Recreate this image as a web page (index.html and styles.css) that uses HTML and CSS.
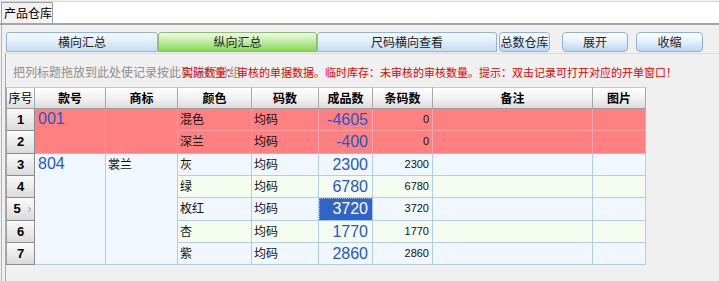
FILE: index.html
```html
<!DOCTYPE html>
<html lang="zh-CN">
<head>
<meta charset="utf-8">
<title>产品仓库</title>
<link rel="stylesheet" href="styles.css">
</head>
<body>
<div class="tabstrip"><div class="tab">产品仓库</div></div>
<div class="frame">
  <div class="toolbar">
    <div class="btn w1">横向汇总</div>
    <div class="btn w2 active">纵向汇总</div>
    <div class="btn w3">尺码横向查看</div>
    <div class="btn w4 round">总数仓库</div>
    <div class="btn w5 round">展开</div>
    <div class="btn w6 round">收缩</div>
  </div>
  <div class="panel">
    <div class="hint">
      <span class="hint-gray">把列标题拖放到此处使记录按此列进行分组</span>
      <span class="hint-red">实际数量：审核的单据数据。临时库存：未审核的审核数量。提示：双击记录可打开对应的开单窗口！</span>
    </div>
    <table class="grid">
      <colgroup>
        <col class="c-no"><col class="c-code"><col class="c-brand"><col class="c-color"><col class="c-size"><col class="c-qty"><col class="c-bar"><col class="c-note"><col class="c-pic">
      </colgroup>
      <thead>
        <tr>
          <th class="th-no">序号</th><th>款号</th><th>商标</th><th>颜色</th><th>码数</th><th>成品数</th><th>条码数</th><th>备注</th><th>图片</th>
        </tr>
      </thead>
      <tbody>
        <tr class="pink">
          <td class="rn">1</td>
          <td class="code" rowspan="2">001</td>
          <td rowspan="2"></td>
          <td class="txt">混色</td><td class="txt">均码</td>
          <td class="qty">-4605</td><td class="bar">0</td><td></td><td></td>
        </tr>
        <tr class="pink tall">
          <td class="rn">2</td>
          <td class="txt">深兰</td><td class="txt">均码</td>
          <td class="qty">-400</td><td class="bar">0</td><td></td><td></td>
        </tr>
        <tr class="blue">
          <td class="rn">3</td>
          <td class="code merged" rowspan="5">804</td>
          <td class="txt merged" rowspan="5">裳兰</td>
          <td class="txt">灰</td><td class="txt">均码</td>
          <td class="qty">2300</td><td class="bar">2300</td><td></td><td></td>
        </tr>
        <tr class="green">
          <td class="rn">4</td>
          <td class="txt">绿</td><td class="txt">均码</td>
          <td class="qty">6780</td><td class="bar">6780</td><td></td><td></td>
        </tr>
        <tr class="blue tall">
          <td class="rn">5<span class="mark">›</span></td>
          <td class="txt">枚红</td><td class="txt">均码</td>
          <td class="qty sel">3720</td><td class="bar">3720</td><td></td><td></td>
        </tr>
        <tr class="green">
          <td class="rn">6</td>
          <td class="txt">杏</td><td class="txt">均码</td>
          <td class="qty">1770</td><td class="bar">1770</td><td></td><td></td>
        </tr>
        <tr class="blue">
          <td class="rn">7</td>
          <td class="txt">紫</td><td class="txt">均码</td>
          <td class="qty">2860</td><td class="bar">2860</td><td></td><td></td>
        </tr>
      </tbody>
    </table>
  </div>
</div>
</body>
</html>
```
FILE: styles.css
```css
* { box-sizing: border-box; }

html, body {
  margin: 0;
  background: #f0f0f0;
  width: 719px;
  height: 281px;
  overflow: hidden;
  font-family: "Noto Sans CJK SC", "Liberation Sans", sans-serif;
  font-size: 12px;
  color: #000;
}

.tabstrip {
  margin-top: 1px;
  height: 24px;
  background: #ffffff;
  border-top: 1px solid #d8d8d8;
  border-bottom: 2px solid #a4a4a4;
  padding-left: 1px;
  display: flex;
  align-items: stretch;
}

.tab {
  width: 52px;
  background: #f2f2f2;
  border: 1px solid #a0a0a0;
  border-bottom: none;
  line-height: 19px;
  padding-left: 2px;
  font-size: 12px;
  white-space: nowrap;
  overflow: hidden;
}

.frame {
  margin-left: 1px;
  border-left: 1px solid #b4b4b4;
  padding-left: 3px;
  height: 256px;
}

.toolbar {
  display: flex;
  padding-top: 7px;
  padding-left: 1px;
  height: 28px;
}

.btn {
  height: 20px;
  border: 1px solid #92b4d6;
  border-radius: 3px 3px 0 0;
  background: linear-gradient(to bottom, #f4f9fe 0%, #e2effb 45%, #c6ddf4 100%);
  text-align: center;
  line-height: 18px;
  font-size: 12px;
  color: #222;
  white-space: nowrap;
}

.btn.active {
  border-color: #8cc070;
  background: linear-gradient(to bottom, #eefbe6 0%, #c2eea6 45%, #86d65a 100%);
}

.btn.round {
  border-radius: 4px;
  border-color: #8eb2d8;
  background: linear-gradient(to bottom, #ffffff 0%, #e6f1fc 45%, #bcd7f2 100%);
}

.w1 { width: 152px; }
.w2 { width: 159px; }
.w3 { width: 180px; }
.w4 { width: 51px; margin-left: 2px; }
.w5 { width: 66px; margin-left: 12px; }
.w6 { width: 67px; margin-left: 8px; }

.panel {
  border-left: 1px solid #a8a8a8;
  border-top: 1px solid #dadada;
  height: 228px;
}

.hint {
  display: grid;
  height: 33px;
  padding-top: 10px;
  line-height: 16px;
  white-space: nowrap;
}

.hint-gray, .hint-red {
  grid-area: 1 / 1;
}

.hint-gray {
  color: #8e8e8e;
  padding-left: 7px;
  font-size: 12px;
}

.hint-red {
  color: #e80000;
  margin-left: 176px;
  font-size: 11px;
}

.grid {
  border-collapse: separate;
  border-spacing: 0;
  table-layout: fixed;
  width: 640px;
}

.c-no { width: 29px; }
.c-code { width: 71px; }
.c-brand { width: 72px; }
.c-color { width: 74px; }
.c-size { width: 67px; }
.c-qty { width: 54px; }
.c-bar { width: 60px; }
.c-note { width: 160px; }
.c-pic { width: 53px; }

.grid th {
  height: 18px;
  padding: 0;
  background: linear-gradient(to bottom, #ffffff 0%, #f2f2f2 50%, #dcdcdc 100%);
  border-right: 1px solid #a8a8a8;
  border-bottom: 1px solid #9c9c9c;
  border-top: 1px solid #c8c8c8;
  font-size: 12px;
  font-weight: bold;
  line-height: 16px;
  text-align: center;
}

.grid th:first-child { border-left: 1px solid #a0a0a0; }

.grid th.th-no { font-weight: normal; }

.grid tr { height: 22px; }
.grid tr.tall { height: 23px; }

.grid td {
  padding: 0 2px;
  border-right: 1px solid #b4cce8;
  border-bottom: 1px solid #b4cce8;
  vertical-align: top;
  line-height: 16px;
  overflow: hidden;
  white-space: nowrap;
}

.grid tr.blue td { background: #f1f7fe; }
.grid tr.green td { background: #f4fcef; }
.grid td.merged { background: #f1f7fe !important; }

.grid tr.pink td {
  background: #ff8080;
  border-right-color: #eca4b4;
  border-bottom-color: #f4a0a4;
}

.grid td.rn {
  background: linear-gradient(to bottom, #fafafa 0%, #ececec 50%, #dadada 100%) !important;
  border-left: 1px solid #a0a0a0;
  border-right: 1px solid #8c8c8c !important;
  border-bottom: 1px solid #8c8c8c !important;
  text-align: center;
  vertical-align: middle;
  font-family: "Liberation Sans", sans-serif;
  font-weight: bold;
  font-size: 13px;
  padding: 0;
  overflow: visible;
}

.mark {
  display: inline-block;
  width: 0;
  margin-left: 7px;
  color: #a8a8a8;
  font-weight: normal;
  font-size: 12px;
}

.grid td.txt {
  padding-top: 2px;
  font-size: 12px;
  color: #111;
}

.grid td.code {
  font-family: "Liberation Sans", sans-serif;
  font-size: 16px;
  line-height: 20px;
  color: #2458cc;
  padding-left: 3px;
  padding-top: 0;
}

.grid td.qty {
  font-family: "Liberation Sans", sans-serif;
  font-size: 16px;
  line-height: 20px;
  color: #2458cc;
  text-align: right;
  vertical-align: middle;
  padding-right: 4px;
}

.grid td.qty.sel {
  background: #3164c8 !important;
  color: #ffffff;
  outline: 1px dotted #a0b8e8;
  outline-offset: -1px;
}

.grid td.bar {
  font-family: "Liberation Sans", sans-serif;
  font-size: 11px;
  color: #111;
  text-align: right;
  padding-right: 3px;
  padding-top: 2px;
}
```
